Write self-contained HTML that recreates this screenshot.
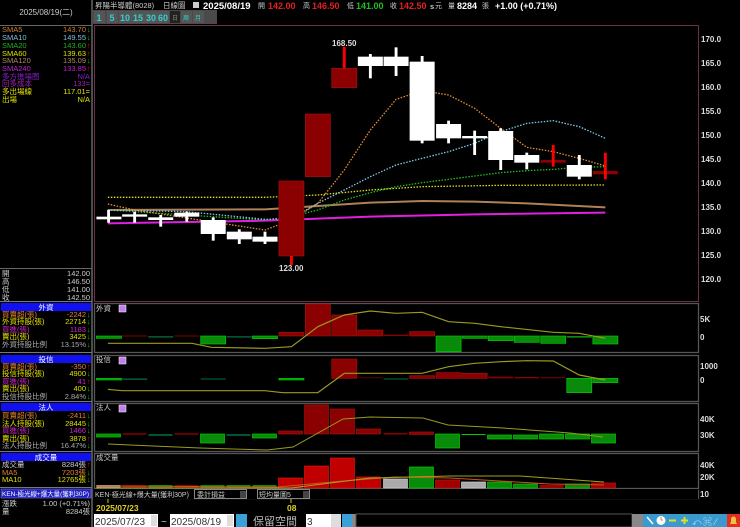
<!DOCTYPE html>
<html><head><meta charset="utf-8"><style>
html,body{margin:0;padding:0;background:#000;width:740px;height:527px;overflow:hidden}
svg{display:block}
text{font-family:"Liberation Sans","Noto Sans CJK TC",sans-serif}
</style></head><body>
<svg width="740" height="527" viewBox="0 0 740 527" xmlns="http://www.w3.org/2000/svg">
<rect width="740" height="527" fill="#000"/>
<line x1="92" y1="0" x2="92" y2="527" stroke="#666" stroke-width="1.5"/>
<line x1="0" y1="25.5" x2="92" y2="25.5" stroke="#666"/>
<text x="46" y="15" fill="#ccc" font-size="8" text-anchor="middle">2025/08/19(二)</text>
<g font-size="7.5">
<text x="2" y="32" fill="#d08030">SMA5</text><text x="86" y="32" fill="#d08030" text-anchor="end">143.70</text><text x="87" y="32" fill="#0c0">↓</text>
<text x="2" y="40" fill="#7ec0e0">SMA10</text><text x="86" y="40" fill="#7ec0e0" text-anchor="end">149.55</text><text x="87" y="40" fill="#0c0">↓</text>
<text x="2" y="48" fill="#20b020">SMA20</text><text x="86" y="48" fill="#20b020" text-anchor="end">143.60</text><text x="87" y="48" fill="#f00">↑</text>
<text x="2" y="56" fill="#e0e000">SMA60</text><text x="86" y="56" fill="#e0e000" text-anchor="end">139.63</text><text x="87" y="56" fill="#f00">↑</text>
<text x="2" y="63" fill="#b08860">SMA120</text><text x="86" y="63" fill="#b08860" text-anchor="end">135.09</text><text x="87" y="63" fill="#0c0">↓</text>
<text x="2" y="71" fill="#c020d0">SMA240</text><text x="86" y="71" fill="#c020d0" text-anchor="end">133.85</text><text x="87" y="71" fill="#f00">↑</text>
<text x="2" y="79" fill="#8020c0">多方進場圈</text><text x="90" y="79" fill="#8020c0" text-anchor="end">N/A</text>
<text x="2" y="86" fill="#a020b0">回多成本</text><text x="90" y="86" fill="#a020b0" text-anchor="end">133=</text>
<text x="2" y="94" fill="#e0e000">多出場線</text><text x="90" y="94" fill="#e0e000" text-anchor="end">117.01=</text>
<text x="2" y="102" fill="#e0e000">出場</text><text x="90" y="102" fill="#e0e000" text-anchor="end">N/A</text>
</g>
<line x1="0" y1="268.5" x2="92" y2="268.5" stroke="#666"/>
<g font-size="7.5" fill="#ccc">
<text x="2" y="276">開</text><text x="90" y="276" text-anchor="end">142.00</text>
<text x="2" y="284">高</text><text x="90" y="284" text-anchor="end">146.50</text>
<text x="2" y="292">低</text><text x="90" y="292" text-anchor="end">141.00</text>
<text x="2" y="300">收</text><text x="90" y="300" text-anchor="end">142.50</text>
</g>
<g font-size="7.5">
<line x1="0" y1="301.5" x2="92" y2="301.5" stroke="#777"/>
<rect x="1" y="303" width="90" height="8" fill="#1010f0"/><text x="46" y="310" fill="#fff" text-anchor="middle">外資</text>
<text x="2" y="317" fill="#e08030">買賣超(張)</text><text x="86" y="317" fill="#e08030" text-anchor="end">-2242</text><text x="87" y="317" fill="#0c0">↓</text>
<text x="2" y="324" fill="#e0e000">外資持股(張)</text><text x="86" y="324" fill="#e0e000" text-anchor="end">22714</text><text x="87" y="324" fill="#0c0">↓</text>
<text x="2" y="332" fill="#d020d0">買進(張)</text><text x="86" y="332" fill="#d020d0" text-anchor="end">1183</text><text x="87" y="332" fill="#0c0">↓</text>
<text x="2" y="339" fill="#e0e000">賣出(張)</text><text x="86" y="339" fill="#e0e000" text-anchor="end">3425</text><text x="87" y="339" fill="#0c0">↓</text>
<text x="2" y="347" fill="#aaa">外資持股比例</text><text x="86" y="347" fill="#aaa" text-anchor="end">13.15%</text><text x="87" y="347" fill="#0c0">↓</text>
<line x1="0" y1="352.5" x2="92" y2="352.5" stroke="#777"/>
<rect x="1" y="355" width="90" height="8" fill="#1010f0"/><text x="46" y="362" fill="#fff" text-anchor="middle">投信</text>
<text x="2" y="369" fill="#e08030">買賣超(張)</text><text x="86" y="369" fill="#e08030" text-anchor="end">-350</text><text x="87" y="369" fill="#f00">↑</text>
<text x="2" y="376" fill="#e0e000">投信持股(張)</text><text x="86" y="376" fill="#e0e000" text-anchor="end">4900</text><text x="87" y="376" fill="#0c0">↓</text>
<text x="2" y="384" fill="#d020d0">買進(張)</text><text x="86" y="384" fill="#d020d0" text-anchor="end">41</text><text x="87" y="384" fill="#f00">↑</text>
<text x="2" y="391" fill="#e0e000">賣出(張)</text><text x="86" y="391" fill="#e0e000" text-anchor="end">400</text><text x="87" y="391" fill="#0c0">↓</text>
<text x="2" y="399" fill="#aaa">投信持股比例</text><text x="86" y="399" fill="#aaa" text-anchor="end">2.84%</text><text x="87" y="399" fill="#0c0">↓</text>
<line x1="0" y1="401.5" x2="92" y2="401.5" stroke="#777"/>
<rect x="1" y="403" width="90" height="8" fill="#1010f0"/><text x="46" y="410" fill="#fff" text-anchor="middle">法人</text>
<text x="2" y="418" fill="#e08030">買賣超(張)</text><text x="86" y="418" fill="#e08030" text-anchor="end">-2411</text><text x="87" y="418" fill="#0c0">↓</text>
<text x="2" y="426" fill="#e0e000">法人持股(張)</text><text x="86" y="426" fill="#e0e000" text-anchor="end">28445</text><text x="87" y="426" fill="#0c0">↓</text>
<text x="2" y="433" fill="#d020d0">買進(張)</text><text x="86" y="433" fill="#d020d0" text-anchor="end">1466</text><text x="87" y="433" fill="#0c0">↓</text>
<text x="2" y="441" fill="#e0e000">賣出(張)</text><text x="86" y="441" fill="#e0e000" text-anchor="end">3878</text><text x="87" y="441" fill="#f00">↑</text>
<text x="2" y="448" fill="#aaa">法人持股比例</text><text x="86" y="448" fill="#aaa" text-anchor="end">16.47%</text><text x="87" y="448" fill="#0c0">↓</text>
<line x1="0" y1="451.5" x2="92" y2="451.5" stroke="#777"/>
<rect x="1" y="453" width="90" height="8" fill="#1010f0"/><text x="46" y="460" fill="#fff" text-anchor="middle">成交量</text>
<text x="2" y="467" fill="#ccc">成交量</text><text x="86" y="467" fill="#ccc" text-anchor="end">8284張</text><text x="87" y="467" fill="#f00">↑</text>
<text x="2" y="475" fill="#e08030">MA5</text><text x="86" y="475" fill="#e08030" text-anchor="end">7203張</text><text x="87" y="475" fill="#0c0">↓</text>
<text x="2" y="482" fill="#e0e000">MA10</text><text x="86" y="482" fill="#e0e000" text-anchor="end">12765張</text><text x="87" y="482" fill="#0c0">↓</text>
<line x1="0" y1="487.5" x2="92" y2="487.5" stroke="#777"/>
<rect x="1" y="489" width="90" height="9" fill="#2020c0" stroke="#88f" stroke-width="0.5"/><text x="2" y="496" fill="#fff" font-size="6.5" textLength="87" lengthAdjust="spacingAndGlyphs">KEN-極光線+爆大量(獲利30P)</text>
<text x="2" y="506" fill="#ccc">漲跌</text><text x="90" y="506" fill="#ccc" text-anchor="end">1.00 (+0.71%)</text>
<text x="2" y="514" fill="#ccc">量</text><text x="90" y="514" fill="#ccc" text-anchor="end">8284張</text>
</g>

<!-- header -->
<text x="95" y="8" font-size="7.5" fill="#ccc">昇陽半導體(8028)</text>
<text x="163" y="8" font-size="7.5" fill="#ccc">日線圖</text>
<rect x="193" y="2" width="6" height="6" fill="#ccc"/>
<text x="203" y="9" font-size="9.5" font-weight="bold" fill="#fff">2025/08/19</text>
<text x="258" y="8" font-size="7" fill="#ccc">開</text>
<text x="268" y="9" font-size="9" font-weight="bold" fill="#e02020">142.00</text>
<text x="303" y="8" font-size="7" fill="#ccc">高</text>
<text x="312" y="9" font-size="9" font-weight="bold" fill="#e02020">146.50</text>
<text x="347" y="8" font-size="7" fill="#ccc">低</text>
<text x="356" y="9" font-size="9" font-weight="bold" fill="#20c020">141.00</text>
<text x="390" y="8" font-size="7" fill="#ccc">收</text>
<text x="399" y="9" font-size="9" font-weight="bold" fill="#e02020">142.50</text>
<text x="430" y="9" font-size="7.5" font-weight="bold" fill="#ccc">s</text>
<text x="435" y="8" font-size="7" fill="#ccc">元</text>
<text x="448" y="8" font-size="7" fill="#ccc">量</text>
<text x="457" y="9" font-size="9" font-weight="bold" fill="#fff">8284</text>
<text x="482" y="8" font-size="7" fill="#ccc">張</text>
<text x="495" y="9" font-size="9" font-weight="bold" fill="#fff">+1.00 (+0.71%)</text>
<!-- buttons -->
<rect x="93" y="10" width="124" height="14" fill="#4a4a4a"/>
<g font-size="9" font-weight="bold" fill="#30d0d0" text-anchor="middle">
<rect x="94" y="11" width="11" height="12" fill="#555"/><text x="99" y="21">1</text>
<rect x="107" y="11" width="11" height="12" fill="#555"/><text x="112" y="21">5</text>
<rect x="119" y="11" width="13" height="12" fill="#555"/><text x="125" y="21">10</text>
<rect x="132" y="11" width="13" height="12" fill="#555"/><text x="138" y="21">15</text>
<rect x="145" y="11" width="13" height="12" fill="#555"/><text x="151" y="21">30</text>
<rect x="157" y="11" width="12" height="12" fill="#555"/><text x="163" y="21">60</text>
<rect x="170" y="11" width="10" height="12" fill="#222"/><text x="175" y="20" font-size="6" fill="#888" font-weight="normal">日</text>
<rect x="181" y="11" width="11" height="12" fill="#555"/><text x="186" y="20" font-size="6" font-weight="normal">周</text>
<rect x="193" y="11" width="11" height="12" fill="#555"/><text x="198" y="20" font-size="6" font-weight="normal">月</text>
</g>

<rect x="94.5" y="25.5" width="604" height="276" fill="none" stroke="#6a3048"/>
<g font-size="8" font-weight="bold" fill="#ddd">
<text x="701" y="42">170.0</text><text x="701" y="66">165.0</text><text x="701" y="90">160.0</text><text x="701" y="114">155.0</text><text x="701" y="138">150.0</text><text x="701" y="162">145.0</text><text x="701" y="186">140.0</text><text x="701" y="210">135.0</text><text x="701" y="234">130.0</text><text x="701" y="258">125.0</text><text x="701" y="282">120.0</text>
</g>
<g transform="translate(90,30) scale(0.35714,0.33333)">
<g fill="none">
<polyline vector-effect="non-scaling-stroke" stroke="#b08058" stroke-width="2" points="50,540 490,538 638,528 785,518 930,513 1077,515 1223,520 1443,532"/>
<polyline vector-effect="non-scaling-stroke" stroke="#e020e0" stroke-width="2" points="50,580 490,572 785,560 1077,553 1443,548"/>
<polyline vector-effect="non-scaling-stroke" stroke="#e0e020" stroke-width="1.3" stroke-dasharray="1.5 1.5" points="50,502 490,502 638,495 785,480 930,470 1150,466 1443,465"/>
<polyline vector-effect="non-scaling-stroke" stroke="#20c020" stroke-width="1.3" stroke-dasharray="1.5 1.5" points="50,540 490,570 564,560 638,540 712,510 785,488 857,470 930,458 1004,448 1077,438 1150,428 1223,422 1297,418 1370,412 1443,410"/>
<polyline vector-effect="non-scaling-stroke" stroke="#80c8e8" stroke-width="1.3" stroke-dasharray="1.5 1.5" points="50,540 270,545 490,568 564,565 638,520 712,480 785,440 857,405 930,385 1004,365 1077,340 1150,305 1223,280 1297,272 1370,290 1443,325"/>
<polyline vector-effect="non-scaling-stroke" stroke="#e89030" stroke-width="1.3" stroke-dasharray="1.5 1.5" points="50,522 125,540 490,600 564,570 638,520 712,420 785,300 857,208 930,182 1004,195 1077,235 1150,295 1223,352 1297,365 1370,385 1443,408"/>
</g>
<g fill="#fff">
<rect x="18" y="560" width="70" height="8"/><rect x="48" y="540" width="8" height="38"/>
<rect x="90" y="553" width="70" height="7"/><rect x="121" y="545" width="8" height="33"/>
<rect x="163" y="562" width="70" height="8"/><rect x="194" y="555" width="8" height="35"/>
<rect x="236" y="548" width="70" height="12"/><rect x="267" y="545" width="8" height="30"/>
<rect x="310" y="570" width="70" height="42"/><rect x="341" y="562" width="8" height="70"/>
<rect x="383" y="605" width="70" height="23"/><rect x="414" y="598" width="8" height="44"/>
<rect x="455" y="620" width="70" height="15"/><rect x="486" y="605" width="8" height="37"/>
<rect x="750" y="80" width="70" height="28"/><rect x="781" y="72" width="8" height="73"/>
<rect x="822" y="80" width="70" height="28"/><rect x="853" y="52" width="8" height="86"/>
<rect x="895" y="95" width="70" height="237"/><rect x="926" y="78" width="8" height="262"/>
<rect x="969" y="282" width="70" height="43"/><rect x="1000" y="272" width="8" height="68"/>
<rect x="1042" y="318" width="70" height="7"/><rect x="1073" y="302" width="8" height="73"/>
<rect x="1115" y="303" width="70" height="87"/><rect x="1146" y="295" width="8" height="125"/>
<rect x="1188" y="375" width="70" height="23"/><rect x="1219" y="368" width="8" height="50"/>
<rect x="1335" y="405" width="70" height="35"/><rect x="1366" y="375" width="8" height="73"/>
</g>
<g>
<rect x="529" y="453" width="70" height="225" fill="#8b0000" stroke="#a01010" stroke-width="2"/><rect x="560" y="678" width="8" height="27" fill="#f00"/>
<rect x="603" y="252" width="70" height="188" fill="#8b0000" stroke="#a01010" stroke-width="2"/>
<rect x="677" y="115" width="70" height="58" fill="#8b0000" stroke="#a01010" stroke-width="2"/><rect x="708" y="50" width="8" height="65" fill="#f00"/>
<rect x="1262" y="390" width="70" height="8" fill="#8b0000"/><rect x="1293" y="345" width="8" height="65" fill="#f00"/>
<rect x="1408" y="423" width="70" height="10" fill="#8b0000"/><rect x="1439" y="368" width="8" height="80" fill="#f00"/>
</g>
</g>
<text x="332" y="46" font-size="8" font-weight="bold" fill="#ddd">168.50</text>
<text x="279" y="271" font-size="8" font-weight="bold" fill="#ddd">123.00</text>

<g fill="none" stroke="#555" stroke-width="1.3">
<rect x="94.5" y="303.5" width="604" height="49"/>
<rect x="94.5" y="355.5" width="604" height="46"/>
<rect x="94.5" y="403.5" width="604" height="48"/>
<rect x="94.5" y="453.5" width="604" height="35"/>
<rect x="94.5" y="490.5" width="604" height="8"/>
</g>
<g font-size="7.5" fill="#ccc">
<text x="96" y="311">外資</text><text x="96" y="362">投信</text><text x="96" y="410">法人</text><text x="96" y="460">成交量</text>
</g>
<g fill="#c080f0" stroke="#fff" stroke-width="0.5">
<rect x="119" y="305" width="7" height="7"/><rect x="119" y="357" width="7" height="7"/><rect x="119" y="405" width="7" height="7"/>
</g>
<g font-size="8" font-weight="bold" fill="#ddd">
<text x="700" y="322">5K</text><text x="700" y="340">0</text>
<text x="700" y="369">1000</text><text x="700" y="383">0</text>
<text x="700" y="422">40K</text><text x="700" y="438">30K</text>
<text x="700" y="468">40K</text><text x="700" y="480">20K</text><text x="700" y="497">10</text>
</g>

<g transform="translate(90,295) scale(0.35714,0.33333)">
<g stroke-width="2">
<rect x="18" y="123" width="70" height="7" fill="#0a8a0a" stroke="#0c0"/>
<rect x="90" y="120" width="70" height="6" fill="#400"/>
<rect x="163" y="123" width="70" height="5" fill="#053"/>
<rect x="236" y="120" width="70" height="6" fill="#400"/>
<rect x="310" y="123" width="70" height="24" fill="#0a8a0a" stroke="#0c0"/>
<rect x="383" y="123" width="70" height="5" fill="#053"/>
<rect x="455" y="123" width="70" height="8" fill="#0a8a0a" stroke="#0c0"/>
<rect x="529" y="112" width="70" height="11" fill="#8b0000" stroke="#a01010"/>
<rect x="603" y="27" width="70" height="96" fill="#8b0000" stroke="#a01010"/>
<rect x="677" y="60" width="70" height="63" fill="#8b0000" stroke="#a01010"/>
<rect x="750" y="105" width="70" height="18" fill="#8b0000" stroke="#a01010"/>
<rect x="822" y="119" width="70" height="4" fill="#8b0000"/>
<rect x="895" y="110" width="70" height="13" fill="#8b0000" stroke="#a01010"/>
<rect x="969" y="123" width="70" height="47" fill="#0a8a0a" stroke="#0c0"/>
<rect x="1042" y="123" width="70" height="7" fill="#0a8a0a" stroke="#0c0"/>
<rect x="1115" y="123" width="70" height="14" fill="#0a8a0a" stroke="#0c0"/>
<rect x="1188" y="123" width="70" height="19" fill="#0a8a0a" stroke="#0c0"/>
<rect x="1262" y="123" width="70" height="22" fill="#0a8a0a" stroke="#0c0"/>
<rect x="1335" y="123" width="70" height="5" fill="#0a8a0a"/>
<rect x="1408" y="123" width="70" height="24" fill="#0a8a0a" stroke="#0c0"/>
<rect x="18" y="250" width="70" height="5" fill="#0a8a0a" stroke="#0c0"/>
<rect x="90" y="250" width="70" height="5" fill="#053"/>
<rect x="310" y="250" width="70" height="4" fill="#053"/>
<rect x="529" y="250" width="70" height="5" fill="#0a8a0a" stroke="#0c0"/>
<rect x="677" y="192" width="70" height="58" fill="#8b0000" stroke="#a01010"/>
<rect x="750" y="246" width="70" height="4" fill="#400"/>
<rect x="822" y="250" width="70" height="4" fill="#053"/>
<rect x="895" y="242" width="70" height="8" fill="#8b0000" stroke="#a01010"/>
<rect x="969" y="233" width="70" height="17" fill="#8b0000" stroke="#a01010"/>
<rect x="1042" y="235" width="70" height="15" fill="#8b0000" stroke="#a01010"/>
<rect x="1115" y="245" width="70" height="5" fill="#8b0000"/>
<rect x="1188" y="246" width="70" height="4" fill="#8b0000"/>
<rect x="1262" y="246" width="70" height="4" fill="#600"/>
<rect x="1335" y="250" width="70" height="43" fill="#0a8a0a" stroke="#0c0"/>
<rect x="1408" y="250" width="70" height="13" fill="#0a8a0a" stroke="#0c0"/>
</g>
<polyline vector-effect="non-scaling-stroke" fill="none" stroke="#9a9a20" stroke-width="1.2" points="50,145 285,145 340,157 490,160 564,155 638,95 712,60 785,48 857,55 930,52 1004,80 1077,85 1150,95 1297,112 1370,115 1443,130"/>
<polyline vector-effect="non-scaling-stroke" fill="none" stroke="#9a9a20" stroke-width="1.2" points="50,283 90,287 490,287 540,293 638,293 712,235 930,235 1004,215 1077,205 1150,200 1223,197 1297,198 1370,240 1443,255"/>
</g>

<g stroke-width="0.7">
<rect x="96.5" y="434" width="24" height="3" fill="#0a8a0a" stroke="#0c0"/>
<rect x="122.5" y="433" width="24" height="2" fill="#600"/>
<rect x="148.5" y="434" width="24" height="2" fill="#053"/>
<rect x="174.5" y="433" width="24" height="2" fill="#600"/>
<rect x="200.5" y="434" width="24" height="9" fill="#0a8a0a" stroke="#0c0"/>
<rect x="226.5" y="434" width="24" height="2" fill="#053"/>
<rect x="252.5" y="434" width="24" height="4" fill="#0a8a0a" stroke="#0c0"/>
<rect x="278.5" y="431" width="24" height="3" fill="#8b0000" stroke="#a01010"/>
<rect x="304.5" y="405" width="24" height="29" fill="#8b0000" stroke="#a01010"/>
<rect x="330.5" y="409" width="24" height="25" fill="#8b0000" stroke="#a01010"/>
<rect x="356.5" y="429" width="24" height="5" fill="#8b0000" stroke="#a01010"/>
<rect x="383.5" y="433" width="24" height="1.5" fill="#8b0000"/>
<rect x="409.5" y="432" width="24" height="2.5" fill="#8b0000" stroke="#a01010"/>
<rect x="435.5" y="434" width="24" height="14" fill="#0a8a0a" stroke="#0c0"/>
<rect x="461.5" y="434" width="24" height="1" fill="#0c0"/>
<rect x="487.5" y="435" width="24" height="4" fill="#0a8a0a" stroke="#0c0"/>
<rect x="513.5" y="435" width="24" height="4" fill="#0a8a0a" stroke="#0c0"/>
<rect x="539.5" y="434" width="24" height="5" fill="#0a8a0a" stroke="#0c0"/>
<rect x="565.5" y="434" width="24" height="5" fill="#0a8a0a" stroke="#0c0"/>
<rect x="591.5" y="434" width="24" height="9" fill="#0a8a0a" stroke="#0c0"/>
</g>
<polyline fill="none" stroke="#9a9a20" stroke-width="1" points="108,444 200,448 233,449 267,450 293,447 343,419 370,417 423,418 448,425 503,428 570,433 603,437"/>

<g stroke-width="0.7">
<rect x="96.5" y="485" width="24" height="3" fill="#aaa"/>
<rect x="122.5" y="485" width="24" height="3" fill="#8b0000"/>
<rect x="148.5" y="485" width="24" height="3" fill="#0a8a0a"/>
<rect x="174.5" y="485" width="24" height="3" fill="#8b0000"/>
<rect x="200.5" y="485" width="24" height="3" fill="#0a8a0a"/>
<rect x="226.5" y="485" width="24" height="3" fill="#0a8a0a"/>
<rect x="252.5" y="485" width="24" height="3" fill="#0a8a0a"/>
<rect x="278.5" y="478" width="24" height="10" fill="#c00000" stroke="#e01010"/>
<rect x="304.5" y="466" width="24" height="22" fill="#c00000" stroke="#e01010"/>
<rect x="330.5" y="458" width="24" height="30" fill="#c00000" stroke="#e01010"/>
<rect x="356.5" y="477" width="24" height="11" fill="#c00000" stroke="#e01010"/>
<rect x="383.5" y="479" width="24" height="9" fill="#aaa" stroke="#ccc"/>
<rect x="409.5" y="467" width="24" height="21" fill="#0a8a0a" stroke="#0c0"/>
<rect x="435.5" y="480" width="24" height="8" fill="#a00000" stroke="#c01010"/>
<rect x="461.5" y="482" width="24" height="6" fill="#aaa" stroke="#ccc"/>
<rect x="487.5" y="482" width="24" height="6" fill="#0a8a0a" stroke="#0c0"/>
<rect x="513.5" y="484" width="24" height="4" fill="#0a8a0a" stroke="#0c0"/>
<rect x="539.5" y="485" width="24" height="3" fill="#a00000"/>
<rect x="565.5" y="484" width="24" height="4" fill="#0a8a0a" stroke="#0c0"/>
<rect x="591.5" y="483" width="24" height="5" fill="#a00000" stroke="#c01010"/>
</g>
<polyline fill="none" stroke="#d05020" stroke-width="1" points="96,486 278,487 343,481 395,477 450,478 500,481 550,484 604,485"/>
<polyline fill="none" stroke="#a0a020" stroke-width="1" points="96,488 291,488 370,478 450,476 520,476 604,482"/>

<rect x="94" y="489" width="604" height="10" fill="#000"/>
<text x="95" y="497" font-size="7" fill="#ccc">KEN-極光線+爆大量(獲利30P)</text>
<rect x="194.5" y="489.5" width="52" height="9" fill="#000" stroke="#888"/><text x="197" y="497" font-size="7" fill="#ccc">委計損益</text><rect x="240" y="491" width="6" height="7" fill="#444"/>
<rect x="257.5" y="489.5" width="52" height="9" fill="#000" stroke="#888"/><text x="259" y="497" font-size="7" fill="#ccc">短均量圖5</text><rect x="303" y="491" width="6" height="7" fill="#444"/>
<line x1="108" y1="499" x2="108" y2="503" stroke="#cc0"/>
<text x="96" y="511" font-size="8.5" font-weight="bold" fill="#e0d020">2025/07/23</text>
<text x="287" y="511" font-size="8.5" font-weight="bold" fill="#e0d020">08</text>
<line x1="291" y1="499" x2="291" y2="503" stroke="#cc0"/>

<rect x="93" y="513" width="547" height="14" fill="#000"/>
<rect x="94" y="514" width="64" height="13" fill="#fff"/><text x="95" y="525" font-size="10" fill="#333">2025/07/23</text><rect x="151" y="515" width="6" height="11" fill="#ddd"/>
<text x="161" y="525" font-size="10" fill="#ccc">~</text>
<rect x="170" y="514" width="64" height="13" fill="#fff"/><text x="171" y="525" font-size="10" fill="#333">2025/08/19</text><rect x="227" y="515" width="6" height="11" fill="#ddd"/>
<rect x="236" y="514" width="11" height="13" fill="#3aa0d8"/>
<text x="253" y="525" font-size="11" fill="#bbb">保留空間</text>
<rect x="306" y="514" width="25" height="13" fill="#fff"/><text x="307" y="525" font-size="10" fill="#333">3</text><rect x="331" y="514" width="10" height="13" fill="#ddd"/>
<rect x="342" y="514" width="10" height="13" fill="#3aa0d8"/><rect x="352" y="514" width="4" height="13" fill="#888"/>
<rect x="356" y="514" width="276" height="13" fill="#000" stroke="#555"/>
<rect x="632" y="514" width="11" height="13" fill="#888"/>
<rect x="643" y="514" width="84" height="13" fill="#3a9ad0"/>
<g fill="#fff">
<circle cx="661" cy="520.5" r="4.5"/><line x1="661" y1="520" x2="663" y2="520" stroke="#e08020"/><line x1="661" y1="517" x2="661" y2="520" stroke="#e08020"/>
<line x1="647" y1="517" x2="653" y2="524" stroke="#fff" stroke-width="1.5"/>
<rect x="669" y="519.5" width="7" height="2" fill="#e0e020"/>
<rect x="681" y="519.5" width="7" height="2" fill="#e0e020"/><rect x="683.5" y="517" width="2" height="7" fill="#e0e020"/>
<text x="692" y="525" font-size="9" fill="#bde">⤺</text><text x="703" y="525" font-size="9" fill="#bde">⌘</text><text x="715" y="525" font-size="9" fill="#bde">⁄</text>
</g>
<rect x="727" y="514" width="13" height="13" fill="#e03020"/><path d="M730 524h7l-1-2v-3a2.5 2.5 0 0 0-5 0v3z" fill="#f0c040"/>
</svg>
</body></html>
